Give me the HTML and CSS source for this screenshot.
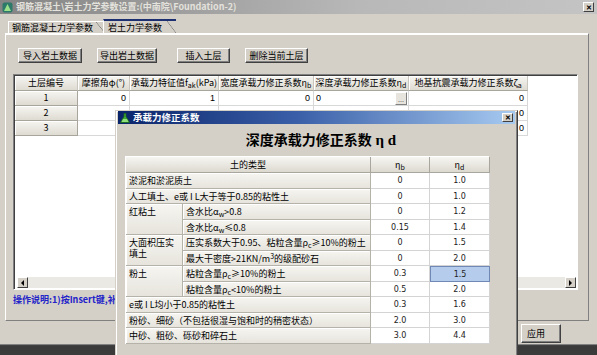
FILE: index.html
```html
<!DOCTYPE html>
<html lang="zh">
<head>
<meta charset="utf-8">
<link rel="stylesheet" href="styles.css">
</head>
<body>
<div class="win">
  <div class="titlebar">
    <svg class="appicon" width="11" height="11" viewBox="0 0 11 11"><rect x="0.5" y="0.5" width="10" height="10" rx="2" fill="#2d7a6a"/><path d="M5.5 2 L9 9 L2 9 Z" fill="#9be08a"/></svg>
    <span class="title">钢筋混凝土\岩土力学参数设置:(中南院\Foundation-2)</span>
    <span class="xbtn">✕</span>
  </div>
  <div class="tabs">
    <div class="tab">钢筋混凝土力学参数</div>
    <div class="tab active">岩土力学参数</div>
  </div>
  <div class="panel">
    <div class="toolbar">
      <div class="btn b1">导入岩土数据</div>
      <div class="btn b2">导出岩土数据</div>
      <div class="btn b3">插入土层</div>
      <div class="btn b4">删除当前土层</div>
    </div>
    <div class="grid">
      <div class="gtable">
        <div class="gh">土层编号</div>
        <div class="gh">摩擦角φ(°)</div>
        <div class="gh">承载力特征值f<sub>ak</sub>(kPa)</div>
        <div class="gh">宽度承载力修正系数η<sub>b</sub></div>
        <div class="gh">深度承载力修正系数η<sub>d</sub></div>
        <div class="gh">地基抗震承载力修正系数ζ<sub>a</sub></div>

        <div class="rh">1</div>
        <div class="gc num">0</div>
        <div class="gc num">1</div>
        <div class="gc num">0</div>
        <div class="gc edit"><span>0</span><span class="ell">...</span></div>
        <div class="gc num">0</div>

        <div class="rh">2</div>
        <div class="gc"></div>
        <div class="gc"></div>
        <div class="gc"></div>
        <div class="gc"></div>
        <div class="gc num">0</div>

        <div class="rh">3</div>
        <div class="gc"></div>
        <div class="gc"></div>
        <div class="gc"></div>
        <div class="gc"></div>
        <div class="gc num">0</div>
      </div>
      <div class="gfill"></div>
      <div class="hscroll">
        <span class="sbtn"><span class="tri-l"></span></span>
        <span class="strack"></span>
        <span class="sbtn"><span class="tri-r"></span></span>
      </div>
    </div>
    <div class="note">操作说明:1)按Insert键,补</div>
  </div>
  <div class="footer">
    <div class="btn apply">应用</div>
  </div>
  <div class="below"></div>
</div>

<div class="dialog">
  <div class="dtitle">
    <svg class="dicon" width="10" height="10" viewBox="0 0 10 10"><path d="M4 0.5 H6 V3.5 L9.5 9.5 H0.5 L4 3.5 Z" fill="#3ea83a" stroke="#1d6a1a" stroke-width="0.8"/><path d="M3 6 H7 L8.5 9 H1.5 Z" fill="#8fe07a"/></svg>
    <span class="dtext">承载力修正系数</span>
    <span class="xbtn dx">✕</span>
  </div>
  <div class="dbody">
    <div class="dhead">深度承载力修正系数<span class="greek"> η d</span></div>
    <div class="ktable">
      <div class="kh span2">土的类型</div>
      <div class="kh">η<sub>b</sub></div>
      <div class="kh">η<sub>d</sub></div>

      <div class="kt span2">淤泥和淤泥质土</div>
      <div class="kv">0</div><div class="kv">1.0</div>

      <div class="kt span2">人工填土、e或 I L大于等于0.85的粘性土</div>
      <div class="kv">0</div><div class="kv">1.0</div>

      <div class="kt rows2">红粘土</div>
      <div class="kt">含水比α<sub>w</sub>&gt;0.8</div>
      <div class="kv">0</div><div class="kv">1.2</div>
      <div class="kt">含水比α<sub>w</sub>≤0.8</div>
      <div class="kv">0.15</div><div class="kv">1.4</div>

      <div class="kt rows2">大面积压实填土</div>
      <div class="kt">压实系数大于0.95、粘粒含量ρ<sub>c</sub>≥10%的粉土</div>
      <div class="kv">0</div><div class="kv">1.5</div>
      <div class="kt">最大干密度&gt;21KN/m<sup>3</sup>的级配砂石</div>
      <div class="kv">0</div><div class="kv">2.0</div>

      <div class="kt rows2">粉土</div>
      <div class="kt">粘粒含量ρ<sub>c</sub>≥10%的粉土</div>
      <div class="kv">0.3</div><div class="kv sel">1.5</div>
      <div class="kt">粘粒含量ρ<sub>c</sub>&lt;10%的粉土</div>
      <div class="kv">0.5</div><div class="kv">2.0</div>

      <div class="kt span2">e或 I L均小于0.85的粘性土</div>
      <div class="kv">0.3</div><div class="kv">1.6</div>

      <div class="kt span2">粉砂、细砂（不包括很湿与饱和时的稍密状态）</div>
      <div class="kv">2.0</div><div class="kv">3.0</div>

      <div class="kt span2">中砂、粗砂、砾砂和碎石土</div>
      <div class="kv">3.0</div><div class="kv">4.4</div>
    </div>
  </div>
</div>
</body>
</html>
```
FILE: styles.css
```css
* { box-sizing: border-box; margin: 0; padding: 0; }
html, body { width: 597px; height: 355px; overflow: hidden; }
body {
  margin: 0;
  position: relative;
  background: #d4d0c8;
  font-family: "Noto Sans CJK SC", "Liberation Sans", sans-serif;
  font-size: 9px;
  color: #000;
}
sub, sup { font-size: 7px; line-height: 0; }
sub { vertical-align: -2px; }
sup { vertical-align: 3px; }

.win {
  width: 597px;
  height: 355px;
  display: flex;
  flex-direction: column;
  background: #d4d0c8;
}

/* title bar */
.titlebar {
  height: 14px;
  display: flex;
  align-items: center;
  padding: 0 3px 0 2px;
  background: linear-gradient(90deg, #848484, #b8b8b8 60%, #c4c4c4);
  color: #e4e2dc;
  font-weight: bold;
}
.title { margin-left: 3px; flex: 1; line-height: 14px; white-space: nowrap; }
.xbtn {
  width: 11px; height: 10px;
  background: #d4d0c8;
  border: 1px solid;
  border-color: #fff #404040 #404040 #fff;
  color: #000;
  font-size: 7px;
  line-height: 8px;
  text-align: center;
  font-weight: bold;
}

/* tabs */
.tabs {
  height: 19px;
  display: flex;
  align-items: flex-end;
  padding-left: 8px;
}
.tab {
  position: relative;
  height: 12px;
  line-height: 11px;
  padding: 0 12px 0 3px;
  border-top: 1px solid #fff;
  border-left: 1px solid #fff;
  background: linear-gradient(115deg, #d4d0c8 calc(100% - 9px), transparent calc(100% - 9px));
  white-space: nowrap;
}
.tab::after {
  content: "";
  position: absolute;
  right: 0; top: 0;
  width: 9px; height: 100%;
  background: linear-gradient(to top right, transparent calc(50% - 0.6px), #808080 50%, transparent calc(50% + 0.6px));
}
.tab.active {
  height: 14px;
  line-height: 13px;
  padding: 0 14px 0 4px;
  border-top: 2px solid #1c2f70;
  margin-left: -2px;
}

/* panel */
.panel {
  height: 288px;
  margin: 0 8px 0 5px;
  border: 1px solid;
  border-color: #fff #808080 #808080 #fff;
  box-shadow: inset 0 1px 0 #fff;
  display: flex;
  flex-direction: column;
}
.toolbar {
  display: flex;
  margin: 14px 0 0 12px;
  height: 15px;
}
.btn {
  height: 15px;
  line-height: 13px;
  text-align: center;
  background: #d4d0c8;
  border: 1px solid;
  border-color: #fff #404040 #404040 #fff;
  box-shadow: inset -1px -1px 0 #808080;
  white-space: nowrap;
}
.b1 { width: 64px; }
.b2 { width: 60px; margin-left: 15px; }
.b3 { width: 53px; margin-left: 20px; }
.b4 { width: 63px; margin-left: 15px; }

/* grid */
.grid {
  margin: 11px 0 0 7px;
  width: 565px;
  height: 216px;
  border: 1px solid;
  border-color: #808080 #fff #fff #808080;
  box-shadow: inset 1px 1px 0 #404040;
  background: #fff;
  display: flex;
  flex-direction: column;
  padding: 1px 0 0 1px;
}
.gtable {
  display: grid;
  grid-template-columns: 63px 52px 89px 95px 95px 119px;
  grid-auto-rows: 15px;
}
.gh, .rh {
  background: linear-gradient(#f6f5f1, #dedbd2);
  border-right: 1px solid #a8a59c;
  border-bottom: 1px solid #a8a59c;
  box-shadow: inset 1px 1px 0 #fff;
  text-align: center;
  line-height: 14px;
  white-space: nowrap;
  overflow: hidden;
}
.gh { border-right-color: #c8c6bf; }
.gc {
  border-right: 1px solid #d8d8d8;
  border-bottom: 1px solid #d8d8d8;
  line-height: 14px;
  padding: 0 3px;
}
.gc.num { text-align: right; font-family: "Liberation Sans", sans-serif; }
.gc.edit {
  display: flex;
  justify-content: space-between;
  align-items: center;
  padding: 0 1px 0 2px;
  font-family: "Liberation Sans", sans-serif;
}
.ell {
  width: 12px; height: 13px;
  background: #e6e4dc;
  border: 1px solid;
  border-color: #fff #808080 #808080 #fff;
  font-size: 7px;
  line-height: 14px;
  text-align: center;
  color: #333;
}
.gfill { flex: 1; }
.hscroll {
  height: 11px;
  display: flex;
  margin: 0 1px 1px 2px;
}
.sbtn {
  width: 11px; height: 11px;
  background: #d4d0c8;
  border: 1px solid;
  border-color: #fff #404040 #404040 #fff;
  display: flex;
  align-items: center;
  justify-content: center;
}
.tri-l, .tri-r { width: 0; height: 0; border-top: 3px solid transparent; border-bottom: 3px solid transparent; }
.tri-l { border-right: 3px solid #000; }
.tri-r { border-left: 3px solid #000; }
.strack { flex: 1; background: #ebe9e3; }

.note {
  margin: 4px 0 0 7px;
  line-height: 12px;
  color: #2323c8;
  font-weight: bold;
  white-space: nowrap;
}

/* footer */
.footer {
  height: 24px;
  display: flex;
  justify-content: flex-end;
  padding: 3px 36px 0 0;
  border-bottom: 1px solid #808080;
}
.btn.apply { width: 40px; height: 19px; line-height: 17px; text-align: left; padding-left: 5px; }
.below { flex: 1; background: #3a3a3a; border-top: 1px solid #404040; }

/* dialog */
.dialog {
  position: absolute;
  left: 115px;
  top: 110px;
  width: 403px;
  height: 250px;
  background: #d4d0c8;
  border: 1px solid;
  border-color: #d4d0c8 #404040 #404040 #d4d0c8;
  box-shadow: inset 1px 1px 0 #fff, inset -1px -1px 0 #808080;
  padding: 0 2px 0 2px;
}
.dtitle {
  height: 13px;
  display: flex;
  align-items: center;
  padding: 0 2px 0 2px;
  background: linear-gradient(90deg, #0a246a, #3a5fa8 45%, #a6caf0);
  color: #fff;
  font-weight: bold;
  font-size: 9.5px;
}
.dicon { margin-right: 3px; }
.dtext { flex: 1; line-height: 13px; }
.dx { height: 9px; line-height: 7px; }
.dbody { padding-left: 7px; }
.dhead {
  height: 32px;
  padding-top: 7px;
  line-height: 16px;
  text-align: center;
  font-size: 14px;
  font-weight: bold;
  padding-left: 20px;
  padding-right: 18px;
  white-space: nowrap;
}
.greek { font-family: "Liberation Serif", serif; font-size: 15px; }
.ktable {
  width: 364px;
  display: grid;
  grid-template-columns: 57px 188px 59px 60px;
  grid-template-rows: 16px repeat(11, 15.5px);
  border-top: 1px solid #fff;
  border-left: 1px solid #fff;
}
.kh {
  background: linear-gradient(#f7f6f2, #dcd9d0);
  border-right: 1px solid #a9a69d;
  border-bottom: 1px solid #a9a69d;
  text-align: center;
  line-height: 15px;
}
.kt {
  background: linear-gradient(#f6f5f1, #e6e4dc);
  border-right: 1px solid #b5b2a9;
  border-bottom: 1px solid #b5b2a9;
  box-shadow: inset 1px 1px 0 #fff;
  padding: 0 3px;
  line-height: 15px;
  white-space: nowrap;
}
.kt.rows2 { grid-row: span 2; white-space: normal; line-height: 11px; padding-top: 2px; }
.span2 { grid-column: span 2; }
.kv {
  background: #fff;
  border-right: 1px solid #d4d4d4;
  border-bottom: 1px solid #d4d4d4;
  text-align: center;
  line-height: 15px;
  font-family: "DejaVu Sans", sans-serif;
  font-size: 8px;
  color: #222;
}
.kv.sel { background: #b6ccec; border: 1px solid #6f89b4; }
```
